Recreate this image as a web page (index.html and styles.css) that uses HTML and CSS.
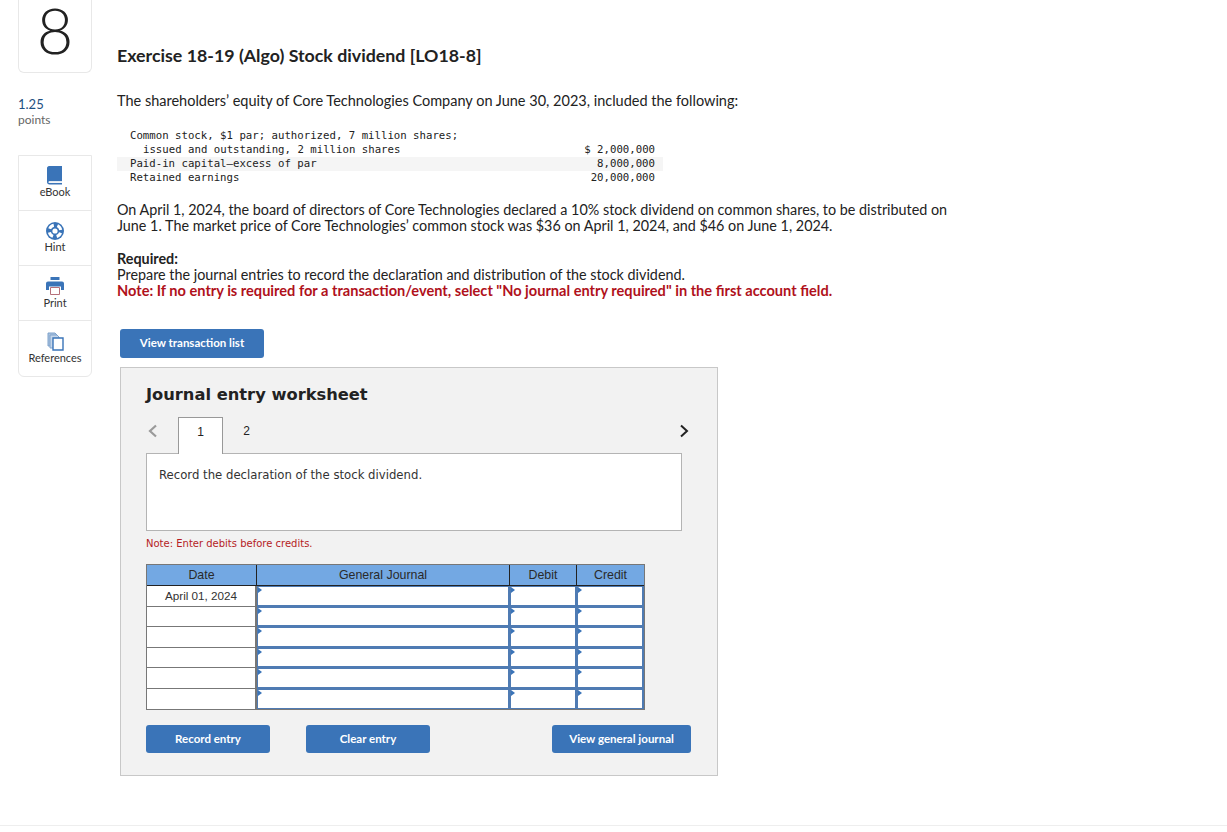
FILE: index.html
```html
<!DOCTYPE html>
<html lang="en">
<head>
<meta charset="utf-8">
<title>Exercise 18-19</title>
<link rel="stylesheet" href="styles.css">
</head>
<body>
<div class="page">
  <aside class="side">
    <div class="qnum">8</div>
    <div class="pts"><div class="pts-val">1.25</div><div class="pts-lab">points</div></div>
    <nav class="tools">
      <div class="tool">
        <svg class="ic" width="18" height="19" viewBox="0 0 18 19"><path d="M3 0h13v15H4c-1 0-1.500.5-1.500 1.200S3 17 4 17h12v1.500H3.500C2 18.500 1 17.500 1 16V2C1 1 2 0 3 0z" fill="#3a74b8"/><path d="M3 15.800h13" stroke="#c9d8ea" stroke-width=".8"/></svg>
        <span>eBook</span>
      </div>
      <div class="tool">
        <svg class="ic" width="18" height="18" viewBox="0 0 18 18"><circle cx="9" cy="9" r="9" fill="#3a74b8"/><circle cx="9" cy="9" r="5.800" fill="none" stroke="#fff" stroke-width="3" stroke-dasharray="5.400 3.710" transform="rotate(18 9 9)"/><circle cx="9" cy="9" r="2.600" fill="#fff"/></svg>
        <span>Hint</span>
      </div>
      <div class="tool tool-print">
        <svg class="ic" width="18" height="18" viewBox="0 0 18 18"><path d="M4.500 0h9v3h-9z" fill="#3a74b8"/><path d="M2 4.500h14a2 2 0 0 1 2 2V13h-3V9.500H3V13H0V6.500a2 2 0 0 1 2-2z" fill="#3a74b8"/><path d="M4.500 10.500h9v7h-9z" fill="#fff" stroke="#b5707a"/></svg>
        <span>Print</span>
      </div>
      <div class="tool">
        <svg class="ic" width="17" height="19" viewBox="0 0 17 19"><path d="M1 1h7l2 2v11H1z" fill="#a9c2de" stroke="#7fa2cc"/><path d="M3 3h7l2 2v11H3z" fill="#c5d6ea" stroke="#7fa2cc"/><path d="M6 6h10v12H6z" fill="#fff" stroke="#3a74b8" stroke-width="1.400"/></svg>
        <span>References</span>
      </div>
    </nav>
  </aside>
  <main class="main">
    <h1 class="title">Exercise 18-19 (Algo) Stock dividend [LO18-8]</h1>
    <p class="intro">The shareholders’ equity of Core Technologies Company on June 30, 2023, included the following:</p>
    <div class="equity">
      <div class="eq-row"><span>Common stock, $1 par; authorized, 7 million shares;</span><span></span></div>
      <div class="eq-row"><span class="ind">issued and outstanding, 2 million shares</span><span>$ 2,000,000</span></div>
      <div class="eq-row shade"><span>Paid-in capital—excess of par</span><span>8,000,000</span></div>
      <div class="eq-row"><span>Retained earnings</span><span>20,000,000</span></div>
    </div>
    <p class="para">On April 1, 2024, the board of directors of Core Technologies declared a 10% stock dividend on common shares, to be distributed on<br>June 1. The market price of Core Technologies’ common stock was $36 on April 1, 2024, and $46 on June 1, 2024.</p>
    <div class="req">
      <div class="req-h">Required:</div>
      <div>Prepare the journal entries to record the declaration and distribution of the stock dividend.</div>
      <div class="req-note">Note: If no entry is required for a transaction/event, select "No journal entry required" in the first account field.</div>
    </div>
    <button class="btn btn-list">View transaction list</button>
    <section class="sheet">
      <h2 class="sheet-h">Journal entry worksheet</h2>
      <div class="tabs">
        <svg class="chev" width="11" height="14" viewBox="0 0 11 14"><path d="M9 1.500 3 7l6 5.500" fill="none" stroke="#9a9a9a" stroke-width="2.200"/></svg>
        <div class="tab on">1</div>
        <div class="tab">2</div>
        <svg class="chev-r" width="11" height="14" viewBox="0 0 11 14"><path d="M2 1.500 8 7l-6 5.500" fill="none" stroke="#222" stroke-width="2"/></svg>
      </div>
      <div class="desc">Record the declaration of the stock dividend.</div>
      <div class="note">Note: Enter debits before credits.</div>
      <div class="tbl">
        <div class="th">Date</div><div class="th">General Journal</div><div class="th">Debit</div><div class="th last">Credit</div>
        <div class="td-date">April 01, 2024</div><div class="inp"></div><div class="inp"></div><div class="inp"></div>
        <div class="td-date"></div><div class="inp"></div><div class="inp"></div><div class="inp"></div>
        <div class="td-date"></div><div class="inp"></div><div class="inp"></div><div class="inp"></div>
        <div class="td-date"></div><div class="inp"></div><div class="inp"></div><div class="inp"></div>
        <div class="td-date"></div><div class="inp"></div><div class="inp"></div><div class="inp"></div>
        <div class="td-date"></div><div class="inp"></div><div class="inp"></div><div class="inp"></div>
      </div>
      <div class="actions">
        <button class="btn btn-rec">Record entry</button>
        <button class="btn btn-clr">Clear entry</button>
        <button class="btn btn-view">View general journal</button>
      </div>
    </section>
  </main>
</div>
<div class="foot"></div>
</body>
</html>
```
FILE: styles.css
```css
* { box-sizing: border-box; }
html, body { margin: 0; padding: 0; background: #fff; }
body { font-family: Lato, "Open Sans", sans-serif; color: #222; height: 832px; overflow: hidden; }
.page { display: flex; height: 825px; padding-left: 18px; }
.foot { border-top: 1px solid #eee; height: 7px; }

.side { width: 74px; flex: none; }
.qnum { height: 73px; border: 1px solid #e8e8e8; border-top: 0; border-radius: 0 0 6px 6px; text-align: center; font-size: 63px; line-height: 60px; color: #222; font-weight: 300; }
.pts { margin-top: 23px; }
.pts-val { font-size: 13px; line-height: 17px; color: #1d4f82; }
.pts-lab { font-size: 12px; line-height: 14px; color: #666; }
.tools { margin-top: 28px; width: 74px; height: 222px; border: 1px solid #e8e8e8; border-radius: 0 0 6px 6px; display: flex; flex-direction: column; }
.tool { height: 55px; border-bottom: 1px solid #e8e8e8; display: flex; flex-direction: column; align-items: center; padding-top: 11px; font-size: 11px; line-height: 14px; color: #333; }
.tool:first-child { padding-top: 10px; }
.tool:last-child { border-bottom: 0; }
.tool-print .ic { margin-bottom: 1px; }
.ic { display: block; flex: none; }

.main { margin-left: 25px; width: 850px; flex: none; }
.title { margin: 45px 0 0; font-size: 17.800px; line-height: 20px; font-weight: 700; color: #222; }
.intro { margin: 28px 0 0; font-size: 14.500px; line-height: 16px; }
.equity { margin-top: 20px; width: 546px; font-family: "DejaVu Sans Mono", monospace; font-size: 10.700px; line-height: 14px; color: #222; }
.eq-row { display: flex; justify-content: space-between; padding: 0 8px 0 13px; height: 14px; white-space: pre; }
.ind { padding-left: 13px; }
.shade { background: #f5f5f5; }
.para { margin: 17px 0 0; font-size: 14.350px; line-height: 16px; }
.req { margin-top: 17px; font-size: 14.350px; line-height: 16px; }
.req-h { font-weight: 700; }
.req-note { font-weight: 700; color: #b0111b; font-size: 14.600px; }

.btn { display: block; border: 0; background: #3a74b8; color: #fff; font-family: Lato, sans-serif; font-weight: 700; font-size: 11.500px; border-radius: 3px; padding: 0 0 2px; text-align: center; }
.btn-list { margin: 30px 0 0 3px; width: 144px; height: 29px; }

.sheet { margin: 9px 0 0 3px; width: 598px; height: 409px; background: #f2f2f2; border: 1px solid #c8c8c8; padding: 0 25px; }
.sheet-h { margin: 16px 0 0; font-family: "DejaVu Sans", sans-serif; font-size: 16.300px; line-height: 22px; font-weight: 700; color: #222; }
.tabs { display: flex; margin-top: 11px; height: 36px; align-items: stretch; position: relative; z-index: 1; }
.chev { margin: 7px 0 0 1px; flex: none; }
.chev-r { margin: 7px 2px 0 auto; flex: none; }
.tab { width: 45px; text-align: center; font-family: "Liberation Sans", sans-serif; font-size: 12px; line-height: 28px; color: #222; }
.tab.on { margin-left: 20px; background: #fff; border: 1px solid #999; border-bottom: 0; height: 37px; }
.tab.on + .tab { padding-left: 2px; }
.desc { width: 536px; height: 78px; background: #fff; border: 1px solid #b4b4b4; padding: 13px 12px 0; font-family: "DejaVu Sans", sans-serif; font-size: 11.700px; line-height: 16px; color: #333; }
.note { margin-top: 7px; font-family: "DejaVu Sans", sans-serif; font-size: 10px; line-height: 12px; color: #b51c24; }
.tbl { margin-top: 14px; width: 499px; display: grid; grid-template-columns: 110px 253px 67px 67px; grid-template-rows: 21px repeat(6, 20.500px); border: 1px solid #777; font-family: "Liberation Sans", sans-serif; font-size: 11.700px; color: #333; }
.th { background: #73a8e3; text-align: center; font-size: 12.400px; line-height: 21px; border-right: 1px solid #222; border-bottom: 1px solid #222; color: #2a2a2a; }
.th.last { border-right: 0; }
.td-date { background: #fff; border-right: 2px solid #777; border-bottom: 1px solid #777; text-align: center; line-height: 20px; }
.td-date:nth-last-child(4) { border-bottom: 0; }
.inp { background: #fff; border: solid #4f7bb3; border-width: 1px 2px 2px 1px; position: relative; }
.inp:nth-last-child(-n+3) { border-bottom-width: 1px; }
.inp::before { content: ""; position: absolute; left: 0; top: 0; border-left: 4px solid #3a74b8; border-top: 3px solid transparent; border-bottom: 3px solid transparent; }
.actions { display: flex; margin-top: 15px; }
.btn-rec { width: 124px; height: 28px; }
.btn-clr { width: 124px; height: 28px; margin-left: 36px; }
.btn-view { width: 139px; height: 28px; margin-left: 122px; }
```
